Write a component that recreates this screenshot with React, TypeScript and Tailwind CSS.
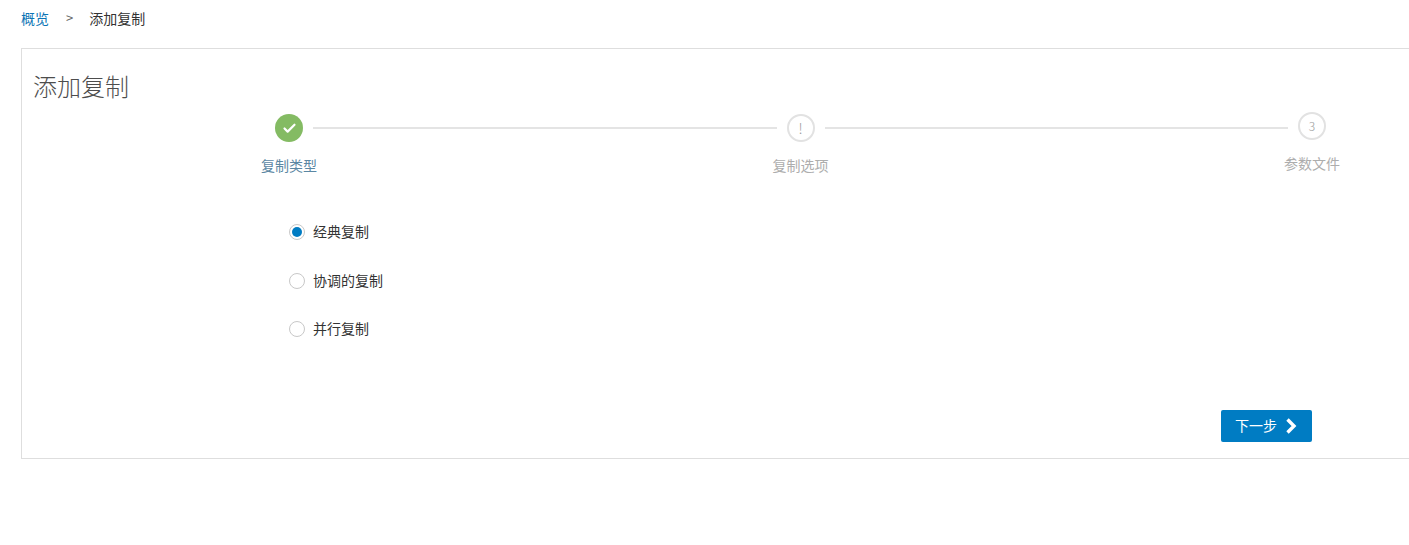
import { Check } from "lucide-react"

const font = { fontFamily: '"Noto Sans CJK SC", "Noto Sans", sans-serif' }

const radios = [
  { label: "经典复制", checked: true },
  { label: "协调的复制", checked: false },
  { label: "并行复制", checked: false },
]

function Connector() {
  return <div className="mx-[-4px] mt-[13px] h-[2px] flex-1 bg-[#e4e4e4]" />
}

export default function App() {
  return (
    <div style={font} className="min-h-[545px] overflow-hidden bg-white pl-[21px] text-[14px] text-[#333]">
      <nav className="flex h-[48px] items-start pt-[8px] leading-[20px]">
        <a className="text-[#0b74b5]">概览</a>
        <span className="mr-[16px] ml-[17px] text-[13px] text-[#666]">&gt;</span>
        <span>添加复制</span>
      </nav>

      <section className="h-[411px] border border-r-0 border-[#dedede] pt-[21px]">
        <h1 className="pl-[11px] text-[24px] leading-[32px] font-light text-[#4d4d4d]">添加复制</h1>

        <div className="mt-[12px] ml-[239px] flex w-[1079px] items-start">
          <div className="flex w-[56px] flex-col items-center">
            <div className="flex h-[28px] w-[28px] items-center justify-center rounded-full bg-[#84bb63]">
              <Check className="h-[15px] w-[15px] text-white" strokeWidth={3.5} />
            </div>
            <span className="mt-[13px] leading-[20px] whitespace-nowrap text-[#5b87a3]">复制类型</span>
          </div>
          <Connector />
          <div className="flex w-[56px] flex-col items-center">
            <div className="flex h-[28px] w-[28px] items-center justify-center rounded-full border-2 border-[#e2e2e2] text-[14px] font-light text-[#999]">
              !
            </div>
            <span className="mt-[13px] leading-[20px] whitespace-nowrap text-[#adadad]">复制选项</span>
          </div>
          <Connector />
          <div className="mt-[-2px] flex w-[56px] flex-col items-center">
            <div className="flex h-[28px] w-[28px] items-center justify-center rounded-full border-2 border-[#e2e2e2] text-[12px] font-light text-[#999]">
              3
            </div>
            <span className="mt-[13px] leading-[20px] whitespace-nowrap text-[#adadad]">参数文件</span>
          </div>
        </div>

        <div className="mt-[48px] ml-[267px] flex flex-col gap-[28.5px]">
          {radios.map(({ label, checked }) => (
            <label key={label} className="flex h-[20px] items-start gap-[8px]">
              <span className="mt-[1px] flex h-[16px] w-[16px] items-center justify-center rounded-full border border-[#c8c8c8]">
                {checked && <span className="h-[10px] w-[10px] rounded-full bg-[#007cc3]" />}
              </span>
              <span className="leading-[17px] text-[#333]">{label}</span>
            </label>
          ))}
        </div>

        <div className="mt-[70px] ml-[1199px] flex h-[32px] w-[91px] items-center gap-[8px] rounded-[2px] bg-[#007cc3] pl-[14px] text-white">
          <span className="mt-[-2px]">下一步</span>
          <svg viewBox="0 0 12 16" className="h-[16px] w-[12px]" fill="none" stroke="currentColor" strokeWidth="3.4">
            <path d="M2.5 1.5 L9 8 L2.5 14.5" />
          </svg>
        </div>
      </section>
    </div>
  )
}
